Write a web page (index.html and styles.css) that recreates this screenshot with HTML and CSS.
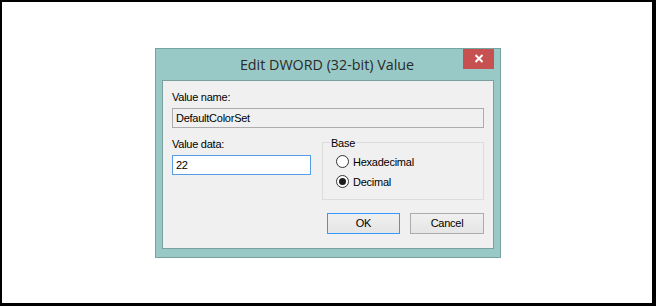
FILE: index.html
```html
<!DOCTYPE html>
<html>
<head>
	<meta charset="utf-8">
	<title>Edit DWORD (32-bit) Value</title>
	<link rel="stylesheet" href="styles.css">
</head>
<body>
	<div class="frame">
		<div class="dlg">
			<div class="bar">
				<span></span>
				<h1>Edit DWORD (32-bit) Value</h1>
				<button class="close" type="button">
					<svg width="10" height="9" viewBox="0 0 10 9"><path d="M1.5 1 8.5 8M8.5 1 1.5 8" stroke="#fff" stroke-width="2"></path></svg>
				</button>
			</div>
			<div class="body">
				<label class="lbl">Value name:</label>
				<input class="in ro mgt" type="text" value="DefaultColorSet" readonly>
				<div class="row">
					<div class="col">
						<label class="lbl">Value data:</label>
						<input class="in focus mgt" type="text" value="22">
					</div>
					<fieldset class="grp">
						<legend>Base</legend>
						<div class="opt"><span class="rd"></span>Hexadecimal</div>
						<div class="opt"><span class="rd on"></span>Decimal</div>
					</fieldset>
				</div>
				<div class="btns">
					<button class="btn def" type="button">OK</button>
					<button class="btn cancel" type="button">Cancel</button>
				</div>
			</div>
		</div>
	</div>
</body>
</html>
```

FILE: styles.css
```css
* {
	margin: 0;
	padding: 0;
	box-sizing: border-box;
}
body {
	font-family: "Liberation Sans", Arial, sans-serif;
	font-size: 11px;
	letter-spacing: -.25px;
	color: #000;
	background: #fff;
}
.frame {
	width: 656px;
	height: 306px;
	border: solid #000;
	border-width: 2px 4px 3px 2px;
	padding-left: 2px;
	display: flex;
	align-items: center;
	justify-content: center;
}
.dlg {
	width: 346px;
	border: 1px solid #77a3a1;
	background: #98c9c6;
	padding: 0 6px 8px;
}
.bar {
	height: 31px;
	display: grid;
	grid-template-columns: 1fr auto 1fr;
}
.bar h1 {
	font-family: "Open Sans", sans-serif;
	font-weight: normal;
	font-size: 14.3px;
	letter-spacing: 0;
	color: #2a2a2a;
	line-height: 31px;
	padding-right: 2px;
}
.close {
	justify-self: end;
	width: 31px;
	height: 20px;
	border: none;
	background: #c75050;
	display: flex;
	align-items: center;
	justify-content: center;
}
.body {
	border: 1px solid #7aa09e;
	background: #f0f0f0;
	padding: 9px 9px 14px;
}
.lbl {
	display: block;
	line-height: 14px;
}
.in {
	display: block;
	height: 20px;
	border: 1px solid #acacac;
	padding: 0 3px;
	font-family: inherit;
	font-size: 11px;
	letter-spacing: -.25px;
	color: #000;
	width: 100%;
	outline: none;
}
.ro {
	background: #f0f0f0;
}
.focus {
	background: #fff;
	border-color: #569de5;
}
.mgt {
	margin-top: 4px;
}
.row {
	display: flex;
	margin-top: 8px;
}
.col {
	width: 139px;
	padding-top: 1px;
}
.grp {
	margin-left: 11px;
	width: 162px;
	height: 64px;
	border: 1px solid #dcdcdc;
	padding: 2px 0 5px 13px;
}
.grp legend {
	line-height: 14px;
	padding: 0 1px;
	margin-left: -6px;
}
.opt {
	height: 20px;
	display: flex;
	align-items: center;
}
.rd {
	width: 13px;
	height: 13px;
	border: 1px solid #333;
	border-radius: 50%;
	background: #fff;
	margin-right: 4px;
	display: flex;
	align-items: center;
	justify-content: center;
}
.rd.on::after {
	content: "";
	width: 7px;
	height: 7px;
	border-radius: 50%;
	background: #1c1c1c;
}
.btns {
	display: flex;
	justify-content: flex-end;
	gap: 10px;
	margin-top: 13px;
}
.btn {
	height: 21px;
	font-family: inherit;
	font-size: 11px;
	letter-spacing: -.25px;
	color: #000;
	border: 1px solid #acacac;
	background: linear-gradient(#f0f0f0, #e5e5e5);
}
.def {
	width: 73px;
	border-color: #3399ff;
}
.cancel {
	width: 74px;
}
```
